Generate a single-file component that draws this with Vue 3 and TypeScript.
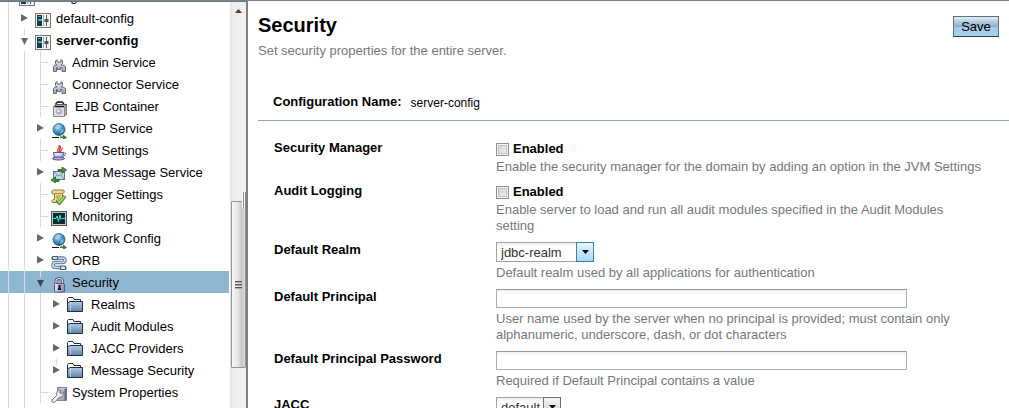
<script setup lang="ts">
import { ref } from 'vue'

type Cell = 'line' | 'right' | 'down' | 'tee' | 'none' | 'rightTail'

interface TreeRow {
  label: string
  icon: string
  cells: Cell[]
  bold?: boolean
  selected?: boolean
  wide?: boolean
}

const rows: TreeRow[] = [
  { label: 'Configurations', icon: 'config', cells: ['line'] },
  { label: 'default-config', icon: 'config', cells: ['line', 'right'] },
  { label: 'server-config', icon: 'config', cells: ['line', 'down'], bold: true },
  { label: 'Admin Service', icon: 'service', cells: ['line', 'line', 'tee'] },
  { label: 'Connector Service', icon: 'service', cells: ['line', 'line', 'tee'] },
  { label: 'EJB Container', icon: 'ejb', cells: ['line', 'line', 'tee'], wide: true },
  { label: 'HTTP Service', icon: 'globe', cells: ['line', 'line', 'right'] },
  { label: 'JVM Settings', icon: 'java', cells: ['line', 'line', 'tee'] },
  { label: 'Java Message Service', icon: 'message', cells: ['line', 'line', 'right'] },
  { label: 'Logger Settings', icon: 'logger', cells: ['line', 'line', 'tee'] },
  { label: 'Monitoring', icon: 'monitor', cells: ['line', 'line', 'tee'] },
  { label: 'Network Config', icon: 'globe', cells: ['line', 'line', 'right'] },
  { label: 'ORB', icon: 'orb', cells: ['line', 'line', 'right'] },
  { label: 'Security', icon: 'lock', cells: ['line', 'line', 'down'], selected: true },
  { label: 'Realms', icon: 'folder', cells: ['line', 'line', 'line', 'right'], wide: true },
  { label: 'Audit Modules', icon: 'folder', cells: ['line', 'line', 'line', 'right'], wide: true },
  { label: 'JACC Providers', icon: 'folder', cells: ['line', 'line', 'line', 'right'], wide: true },
  { label: 'Message Security', icon: 'folder', cells: ['line', 'line', 'line', 'rightTail'], wide: true },
  { label: 'System Properties', icon: 'wrench', cells: ['line', 'line', 'tee'] },
  { label: '', icon: '', cells: ['line', 'line'] },
]

const securityManager = ref(false)
const auditLogging = ref(false)
const realm = ref('jdbc-realm')
const principal = ref('')
const password = ref('')
const jacc = ref('default')
</script>

<template>
  <div class="page">
    <svg class="defs" width="0" height="0" aria-hidden="true">
      <defs>
        <linearGradient id="gFolder" x1="0" y1="0" x2="0" y2="1">
          <stop offset="0" stop-color="#b4cbe2" /><stop offset="1" stop-color="#5d83aa" />
        </linearGradient>
        <radialGradient id="gGlobe" cx=".4" cy=".3" r=".7">
          <stop offset="0" stop-color="#c4e6f8" /><stop offset=".5" stop-color="#4c9bd0" /><stop offset="1" stop-color="#17527f" />
        </radialGradient>
        <linearGradient id="gLock" x1="0" y1="0" x2="1" y2="0">
          <stop offset="0" stop-color="#e4e4f4" /><stop offset="1" stop-color="#8c8cb8" />
        </linearGradient>
        <linearGradient id="gSteel" x1="0" y1="0" x2="0" y2="1">
          <stop offset="0" stop-color="#eceff4" /><stop offset="1" stop-color="#9da5b5" />
        </linearGradient>
      </defs>
      <symbol id="config" viewBox="0 0 16 16">
        <rect x=".5" y=".5" width="15" height="14" fill="#f4f4f4" stroke="#777" />
        <rect x="2" y="2" width="5" height="11" fill="#143c40" />
        <path d="M3 3h3v1H3zM3 6h4v2H3z" fill="#43b5b8" />
        <path d="M8.500 2v11" stroke="#aaa" />
        <path d="M11.500 2v11" stroke="#555" />
        <path d="M9.500 6h4v3h-4z" fill="#555" />
      </symbol>
      <symbol id="service" viewBox="0 0 16 16">
        <path d="M2.500 14.500V9.500L4 8H6L4.500 6.500V4L6 2.500V5H10V2.500L11.500 4V6.500L10 8H12L14.500 9.500V14.500H11V10.500H9.500V12.500H6.500V10.500H5.500V14.500Z" fill="url(#gSteel)" stroke="#616979" />
      </symbol>
      <symbol id="ejb" viewBox="0 0 16 16">
        <path d="M5 4.500V2.500L6.500 1H11L12.500 2.500V4.500" fill="none" stroke="#111" stroke-width="1.500" />
        <path d="M2.500 5.500L5 3.500H15.500L13.500 5.500Z" fill="#ddd" stroke="#555" />
        <path d="M13.500 5.500L16 3.500V13L13.500 15Z" fill="#aaa" stroke="#666" />
        <path d="M2.500 5.500H13.500V15.500H2.500Z" fill="#dedede" stroke="#888" />
        <path d="M4 5.500H13" stroke="#111" stroke-width="1.500" />
        <circle cx="8" cy="10.500" r="3" fill="#aaaac6" /><circle cx="7.500" cy="10" r="1.300" fill="#f5f5ff" />
      </symbol>
      <symbol id="globe" viewBox="0 0 16 16">
        <circle cx="8" cy="6.500" r="6" fill="url(#gGlobe)" stroke="#36617e" stroke-width=".8" />
        <path d="M4 4L7 1.500L10 3L8 6L5 6ZM10 7L13 6L12 10L9 11Z" fill="#a8d2e8" opacity=".6" />
        <path d="M1 14.500H8" stroke="#111" />
        <path d="M9 13.500H12V11.500L16 14.500L12 17V15H9Z" fill="#397a28" />
      </symbol>
      <symbol id="java" viewBox="0 0 16 16">
        <path d="M8 7C3.500 5 10 3.500 8 0C12 3 6.500 4 9 7M10 7C8.500 5 12 4 11.500 2.500" fill="none" stroke="#e14432" stroke-width="1.300" />
        <path d="M2.500 7.500H12.500C13 10 11 12.500 10 12.500H5C3.500 12.500 2.200 10 2.500 7.500Z" fill="#c9c9ed" stroke="#55559c" />
        <path d="M12.500 8C16 7.500 15 11 11.500 11" fill="none" stroke="#55559c" />
        <ellipse cx="7.500" cy="13.500" rx="6" ry="1.500" fill="#b3b3de" stroke="#494987" />
        <path d="M4 9H9" stroke="#fff" />
      </symbol>
      <symbol id="message" viewBox="0 0 16 16">
        <rect x="2.500" y="4.500" width="11" height="8" fill="#c3d5e2" stroke="#5c7687" />
        <path d="M3 5L8 9L13 5M3 12L6 8M13 12L10 8" fill="none" stroke="#7b98ab" />
        <path d="M7 2.500H11V0L15.500 3L11 6V4H7Z" fill="#41992b" stroke="#205e18" stroke-width=".8" />
        <path d="M8 12.500H4.500V10L0 13L4.500 16V14.500H8Z" fill="#41992b" stroke="#205e18" stroke-width=".8" />
      </symbol>
      <symbol id="logger" viewBox="0 0 16 16">
        <path d="M2.500 1H12.500C14 2 13 4.500 11.500 4.500V11C11 13 9.500 13.500 8 13.500H1.500C0 12 1 10.500 3.500 10.500V5H1.500C0 3 1 1 2.500 1Z" fill="#f1d88e" stroke="#927430" />
        <path d="M4 4.500H11M5 7H10M5 9H9" stroke="#a88438" />
        <path d="M6 11L8.500 14L14 7" fill="none" stroke="#438824" stroke-width="3.500" />
        <path d="M6.500 11L8.500 13.500L13.500 7.500" fill="none" stroke="#a5e676" stroke-width="1.500" />
      </symbol>
      <symbol id="monitor" viewBox="0 0 16 16">
        <rect x=".5" y=".5" width="15" height="14" fill="#c3c9c9" stroke="#555" />
        <rect x="2" y="2" width="12" height="11" fill="#062c30" />
        <path d="M2 7.500H5L6 5L7.500 10.500L9 4L10 8.500L11 7.500H14" fill="none" stroke="#3ce0cc" />
      </symbol>
      <symbol id="orb" viewBox="0 0 16 16">
        <path d="M5 3H11C15 3 15 7.500 11 7.500H5C1 7.500 1 12.500 5 12.500H11" fill="none" stroke="#5d768a" stroke-width="3.500" />
        <path d="M5 3H11C15 3 15 7.500 11 7.500H5C1 7.500 1 12.500 5 12.500H11" fill="none" stroke="#c8dcea" stroke-width="1.600" />
        <path d="M1.500 1.500H6.500V4.500H1.500ZM9.500 11H14.500V14.500H9.500Z" fill="#dce9f3" stroke="#3e5769" />
        <path d="M0 3H2M14 13H16" stroke="#3e5769" />
      </symbol>
      <symbol id="lock" viewBox="0 0 16 16">
        <path d="M5 7V4.500C5 .5 11.500 .5 11.500 4.500V7" fill="none" stroke="#5c5c72" stroke-width="3" />
        <path d="M5 7V4.500C5 .5 11.500 .5 11.500 4.500V7" fill="none" stroke="#dedeee" stroke-width="1.200" />
        <rect x="3.500" y="6.500" width="10" height="8.500" rx="1" fill="url(#gLock)" stroke="#55557c" />
        <path d="M7.500 8H9.500V10.500L10.500 13H6.500L7.500 10.500Z" fill="#111124" />
      </symbol>
      <symbol id="folder" viewBox="0 0 16 16">
        <path d="M.5 14.500V1.500L1.500 .5H6L7 2.500H13.500V4.500" fill="#f7f9fc" stroke="#1c2f43" />
        <path d="M.5 14.500V6L3 4.500H15.500V14.500Z" fill="url(#gFolder)" stroke="#1c2f43" />
        <path d="M3.500 5V14" stroke="#d5e3f0" opacity=".6" />
      </symbol>
      <symbol id="wrench" viewBox="0 0 16 16">
        <rect x="6.500" y=".5" width="9" height="13" fill="#a3aab8" stroke="#7b8495" />
        <path d="M8 2H14" stroke="#e8ebf0" />
        <path d="M14.500 2V13" stroke="#5d6880" stroke-width="2" />
        <path d="M1 13L6 8C5 5 7 2.500 9.500 3L8.500 5.500L10.500 7L12.500 5.500C13.500 8 11 10.500 8.500 10L3.500 15.500L1 15Z" fill="#f1f1f1" stroke="#777" />
      </symbol>
    </svg>

    <nav class="sidebar" aria-label="Navigation tree">
      <ul class="tree">
        <li v-for="(row, i) in rows" :key="i" class="row" :class="{ selected: row.selected }">
          <svg v-for="(cell, c) in row.cells" :key="c" class="cell" viewBox="0 0 16 22" aria-hidden="true">
            <path v-if="cell === 'line' || cell === 'tee'" d="M8.500 0V22" stroke="#d9dcde" />
            <path v-if="cell === 'tee'" d="M9 11.500H16.500" stroke="#d9dcde" />
            <path v-if="cell === 'down' || cell === 'rightTail'" d="M8.500 0V6" stroke="#d9dcde" />
            <path v-if="cell === 'right' || cell === 'rightTail'" d="M5 7V14.500L12 11Z" fill="#696969" />
            <path v-if="cell === 'down'" d="M5 9H12L8.500 16Z" :fill="row.selected ? '#41474c' : '#696969'" />
          </svg>
          <a v-if="row.label" class="node" href="#" :class="{ bold: row.bold, wide: row.wide }">
            <svg class="icon" :class="row.icon" viewBox="0 0 16 16" aria-hidden="true"><use :href="'#' + row.icon" /></svg>
            <span>{{ row.label }}</span>
          </a>
        </li>
      </ul>
      <div class="scrollbar" aria-hidden="true">
        <svg class="up" viewBox="0 0 7 4"><path d="M0 4L3.500 0L7 4Z" fill="#444" /></svg>
        <div class="thumb"><i></i><i></i><i></i></div>
      </div>
      <div class="grip" aria-hidden="true"></div>
    </nav>

    <main class="content">
      <header class="head">
        <div>
          <h1>Security</h1>
          <p class="intro">Set security properties for the entire server.</p>
        </div>
        <button type="button" class="save">Save</button>
      </header>
      <div class="config-name"><b>Configuration Name:</b><span>server-config</span></div>
      <form class="form" @submit.prevent>
        <div class="field">
          <span class="label">Security Manager</span>
          <div class="value">
            <label class="check"><input v-model="securityManager" type="checkbox" />Enabled</label>
            <p>Enable the security manager for the domain by adding an option in the JVM Settings</p>
          </div>
        </div>
        <div class="field">
          <span class="label">Audit Logging</span>
          <div class="value">
            <label class="check"><input v-model="auditLogging" type="checkbox" />Enabled</label>
            <p>Enable server to load and run all audit modules specified in the Audit Modules setting</p>
          </div>
        </div>
        <div class="field">
          <label class="label" for="realm">Default Realm</label>
          <div class="value">
            <div class="select active">
              <select id="realm" v-model="realm"><option>jdbc-realm</option></select>
              <span class="drop"><svg viewBox="0 0 7 4"><path d="M0 0H7L3.500 4Z" /></svg></span>
            </div>
            <p>Default realm used by all applications for authentication</p>
          </div>
        </div>
        <div class="field">
          <label class="label" for="principal">Default Principal</label>
          <div class="value">
            <input id="principal" v-model="principal" class="text" type="text" />
            <p>User name used by the server when no principal is provided; must contain only alphanumeric, underscore, dash, or dot characters</p>
          </div>
        </div>
        <div class="field">
          <label class="label" for="password">Default Principal Password</label>
          <div class="value">
            <input id="password" v-model="password" class="text" type="password" />
            <p>Required if Default Principal contains a value</p>
          </div>
        </div>
        <div class="field">
          <label class="label" for="jacc">JACC</label>
          <div class="value">
            <div class="select small">
              <select id="jacc" v-model="jacc"><option>default</option></select>
              <span class="drop"><svg viewBox="0 0 7 4"><path d="M0 0H7L3.500 4Z" /></svg></span>
            </div>
          </div>
        </div>
      </form>
    </main>
  </div>
</template>

<style>
body {
  margin: 0;
  overflow: hidden;
}
</style>

<style scoped>
.page {
  box-sizing: border-box;
  display: flex;
  height: 100vh;
  overflow: hidden;
  border-top: 1px solid #808080;
  background: #fff;
  color: #000;
  font: 13px/16px "Liberation Sans", Arial, sans-serif;
}
.defs {
  position: absolute;
}
.sidebar {
  position: relative;
  box-sizing: border-box;
  display: flex;
  flex: none;
  width: 248px;
  overflow: hidden;
  border-top: 1px solid #5a7f9a;
  border-right: 2px solid #808080;
}
.tree {
  flex: 1;
  margin: -17px 1px 0 0;
  padding: 0;
  list-style: none;
}
.row {
  display: flex;
  height: 22px;
}
.selected {
  background: #8fb6d0;
}
.cell {
  flex: none;
  width: 16px;
  height: 22px;
  overflow: visible;
}
.node {
  display: flex;
  gap: 5px;
  padding-left: 3px;
  color: #000;
  line-height: 24px;
  text-decoration: none;
  white-space: nowrap;
}
.node.wide {
  gap: 8px;
}
.bold {
  font-weight: bold;
}
.icon {
  flex: none;
  width: 16px;
  height: 16px;
  margin-top: 6px;
  overflow: visible;
}
.icon.folder {
  margin-top: 4px;
}
.scrollbar {
  box-sizing: border-box;
  display: flex;
  flex-direction: column;
  align-items: center;
  width: 16px;
  padding-top: 7px;
  background: linear-gradient(90deg, #e3e3e3, #eee 3px, #f0f0f0);
}
.up {
  width: 7px;
  height: 4px;
}
.thumb {
  box-sizing: border-box;
  display: flex;
  flex-direction: column;
  gap: 2px;
  align-items: center;
  justify-content: center;
  width: 15px;
  height: 167px;
  margin-top: 188px;
  border: 1px solid #939393;
  border-radius: 1px;
  background: linear-gradient(90deg, #f7f7f7, #e6e6e8 45%, #c6c7ca 75%, #dcdcde);
}
.thumb i {
  width: 7px;
  height: 1px;
  background: #555;
  box-shadow: 0 1px #aaa;
}
.grip {
  position: absolute;
  top: 190px;
  right: -1px;
  width: 5px;
  height: 16px;
  background: repeating-linear-gradient(90deg, #fff 0 1px, #888 1px 2px);
}
.content {
  flex: 1;
  min-width: 0;
  padding: 14px 0 0 10px;
}
.head {
  display: flex;
  align-items: flex-start;
  justify-content: space-between;
  padding-right: 10px;
}
h1 {
  margin: -2px 0 0;
  font-size: 20px;
  line-height: 24px;
}
p {
  margin: 0;
  color: #76787b;
}
.intro {
  margin-top: 6px;
}
.save {
  width: 46px;
  height: 21px;
  margin-top: 1px;
  padding: 0;
  border: 1px solid #56708a;
  border-bottom-color: #23425e;
  background: linear-gradient(#e5edf3, #88aec8 50%, #a3cbe6 55%, #a9d0ea);
  color: #000;
  font: 13px/16px "Liberation Sans", Arial, sans-serif;
}
.config-name {
  display: flex;
  gap: 9px;
  margin-top: 35px;
  padding: 0 0 9px 15px;
  border-bottom: 1px solid #8ea4b3;
}
.config-name span {
  padding-top: 1px;
  font-size: 12px;
}
.form {
  padding: 19px 24px 0 16px;
}
.field {
  display: flex;
  padding-bottom: 8px;
}
.label {
  flex: none;
  width: 222px;
  font-weight: bold;
}
.value {
  flex: 1;
  min-width: 0;
}
.check {
  display: flex;
  gap: 4px;
  height: 19px;
  line-height: 18px;
  font-weight: bold;
}
.check input {
  appearance: none;
  box-sizing: border-box;
  width: 13px;
  height: 13px;
  margin: 3px 0 0;
  border: 1px solid #8e8f8f;
  background: linear-gradient(135deg, #c9ccd1, #f6f6f6);
  box-shadow: inset 0 0 0 1px #f4f4f4, inset 0 0 0 2px #c0c3c7;
}
.text {
  display: block;
  box-sizing: border-box;
  width: 411px;
  max-width: 100%;
  height: 19px;
  margin: 0 0 3px;
  padding: 0 4px;
  border: 1px solid #abadb3;
  border-top-color: #999;
  background: linear-gradient(#f0f0f0, #fff 4px);
}
.select {
  position: relative;
  width: 98px;
  height: 20px;
  margin: 0 0 3px;
}
.select.small {
  width: 65px;
}
select {
  display: block;
  appearance: none;
  box-sizing: border-box;
  width: 100%;
  height: 20px;
  padding: 2px 18px 0 4px;
  border: 1px solid #a2a2a2;
  border-radius: 0;
  background: linear-gradient(#eee, #fff 4px);
  color: #333;
  font: 13px/16px "Liberation Sans", Arial, sans-serif;
}
.drop {
  position: absolute;
  top: 0;
  right: 0;
  bottom: 0;
  box-sizing: border-box;
  display: flex;
  align-items: center;
  justify-content: center;
  width: 18px;
  border: 1px solid #707070;
  background: linear-gradient(#f3f3f3, #d2d2d2);
  pointer-events: none;
}
.active .drop {
  border-color: #3c7fb1;
  background: linear-gradient(#e6f5fd, #a8d9f5);
}
.drop svg {
  width: 7px;
  height: 4px;
}
</style>
